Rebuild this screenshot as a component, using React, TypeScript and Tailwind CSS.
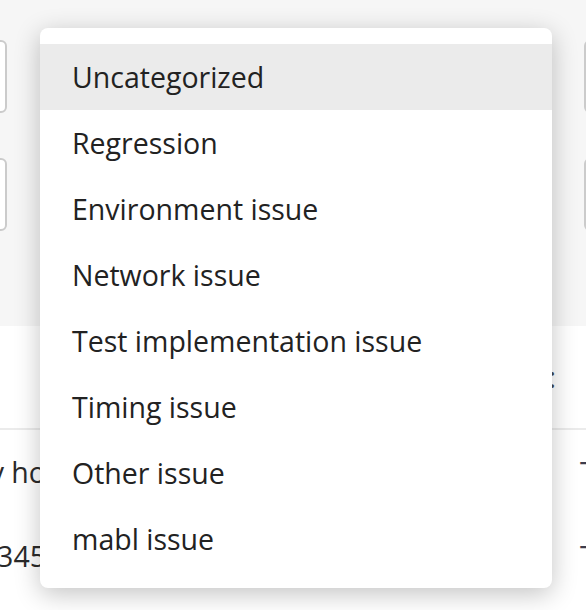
import React from 'react';

const options = [
  'Uncategorized',
  'Regression',
  'Environment issue',
  'Network issue',
  'Test implementation issue',
  'Timing issue',
  'Other issue',
  'mabl issue',
];

function FieldRow() {
  return (
    <div className="flex justify-between">
      <div className="h-[73px] w-[120px] -ml-[113px] rounded-[6px] border-2 border-[#cbcbcb] bg-white" />
      <div className="h-[73px] w-[120px] -mr-[118px] rounded-[6px] border-2 border-[#cbcbcb] bg-white" />
    </div>
  );
}

function TableRow({ left, right }: { left: string; right: string }) {
  return (
    <div className="flex h-[84px] items-center justify-between whitespace-nowrap text-[28.5px] text-[#2a2a2a]">
      <div className="flex w-[46px] justify-end overflow-hidden">
        <span>{left}</span>
      </div>
      <div className="w-[6px] text-[#3d3d4d]">{right}</div>
    </div>
  );
}

export default function App() {
  const [selected, setSelected] = React.useState(0);

  return (
    <div className="relative h-[610px] w-[586px] overflow-hidden bg-white font-['Open_Sans',sans-serif]">
      <div className="flex h-[326px] flex-col gap-[45px] bg-[#f6f6f6] pt-[40px]">
        <FieldRow />
        <FieldRow />
      </div>
      <div className="flex h-[104px] items-center justify-end border-b-2 border-[#ebebeb] pr-[30px] text-[28.5px] text-[#444]">
        Last run:
      </div>
      <TableRow left="Every ho" right="Test" />
      <TableRow left="12345" right="Test" />

      {/* dropdown menu, open over the form */}
      <div className="absolute left-[40px] top-[28px] w-[512px] rounded-[8px] bg-white py-[16px] shadow-[0_6px_26px_rgba(0,0,0,0.24)]">
        {options.map((opt, i) => (
          <div
            key={opt}
            onMouseEnter={() => setSelected(i)}
            className={
              'flex h-[66px] cursor-pointer items-center px-[32px] text-[28.5px] text-[#222] ' +
              (i === selected ? 'bg-[#ebebeb]' : 'bg-white')
            }
          >
            {opt}
          </div>
        ))}
      </div>
    </div>
  );
}
